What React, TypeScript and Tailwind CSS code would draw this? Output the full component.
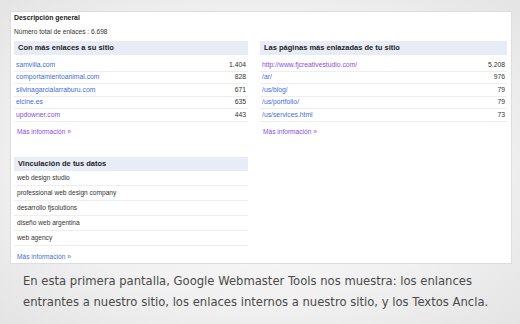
import React from 'react';

type Row = { label: string; value?: string; visited?: boolean };

const topSites: Row[] = [
  { label: 'samvilla.com', value: '1.404' },
  { label: 'comportamientoanimal.com', value: '828' },
  { label: 'silvinagarcialarraburu.com', value: '671' },
  { label: 'elcine.es', value: '635' },
  { label: 'updowner.com', value: '443', visited: true },
];

const topPages: Row[] = [
  { label: 'http://www.fjcreativestudio.com/', value: '5.208', visited: true },
  { label: '/ar/', value: '976' },
  { label: '/us/blog/', value: '79' },
  { label: '/us/portfolio/', value: '79' },
  { label: '/us/services.html', value: '73' },
];

const anchors = [
  'web design studio',
  'professional web design company',
  'desarrollo fjsolutions',
  'diseño web argentina',
  'web agency',
];

const Header = ({ title }: { title: string }) => (
  <div className="h-[14px] bg-[#e8ecf6] pl-[4px] text-[7.5px] leading-[14px] font-bold text-[#222]">
    {title}
  </div>
);

const MoreLink = ({ visited }: { visited?: boolean }) => (
  <div
    className={`h-[14px] pl-[3px] text-[6.6px] leading-[14px] ${
      visited ? 'text-[#8a4fd8]' : 'text-[#3f6fd8]'
    }`}
  >
    Más información »
  </div>
);

const LinkTable = ({ title, rows }: { title: string; rows: Row[] }) => (
  <div className="flex flex-col">
    <Header title={title} />
    <div className="mt-[4px] flex flex-col">
      {rows.map((r) => (
        <div
          key={r.label}
          className="flex h-[12.5px] items-center justify-between border-b border-[#eeeeee] pl-[2px] pr-[2px] text-[6.8px]"
        >
          <span className={r.visited ? 'text-[#8a4fd8]' : 'text-[#3f6fd8]'}>{r.label}</span>
          <span className="text-[#333]">{r.value}</span>
        </div>
      ))}
    </div>
    <div className="mt-[3px]">
      <MoreLink visited />
    </div>
  </div>
);

export default function App() {
  return (
    <div
      className="flex h-[324px] w-[520px] flex-col overflow-hidden bg-[radial-gradient(ellipse_at_center,#fdfdfd_0%,#f1f1f1_60%,#e4e4e4_100%)]"
      style={{ fontFamily: '"Liberation Sans", Arial, sans-serif' }}
    >
      <div className="mt-[11px] ml-[10px] flex h-[253px] w-[502px] flex-col border border-[#dddddd] bg-white pl-[3px] pr-[4px]">
        <div className="h-[11px] text-[6.9px] leading-[11px] font-bold text-[#222]">Descripción general</div>
        <div className="mt-[3px] h-[12px] text-[6.6px] leading-[12px] text-[#333]">
          Número total de enlaces : 6.698
        </div>
        <div className="mt-[3px] flex gap-[12px]">
          <div className="w-[234px]">
            <LinkTable title="Con más enlaces a su sitio" rows={topSites} />
          </div>
          <div className="flex-1">
            <LinkTable title="Las páginas más enlazadas de tu sitio" rows={topPages} />
          </div>
        </div>
        <div className="mt-[18px] flex w-[234px] flex-col">
          <Header title="Vinculación de tus datos" />
          <div className="flex flex-col">
            {anchors.map((a) => (
              <div
                key={a}
                className="flex h-[15px] items-center border-b border-[#eeeeee] pl-[3px] text-[6.6px] text-[#333]"
              >
                {a}
              </div>
            ))}
          </div>
          <div className="mt-[4px]">
            <MoreLink />
          </div>
        </div>
      </div>
      <p
        className="mt-[7px] pl-[23px] text-[11.6px] leading-[21px] whitespace-nowrap text-[#4a4a4a]"
        style={{ fontFamily: '"DejaVu Sans", Verdana, sans-serif' }}
      >
        En esta primera pantalla, Google Webmaster Tools nos muestra: los enlances
        <br />
        entrantes a nuestro sitio, los enlaces internos a nuestro sitio, y los Textos Ancla.
      </p>
    </div>
  );
}
